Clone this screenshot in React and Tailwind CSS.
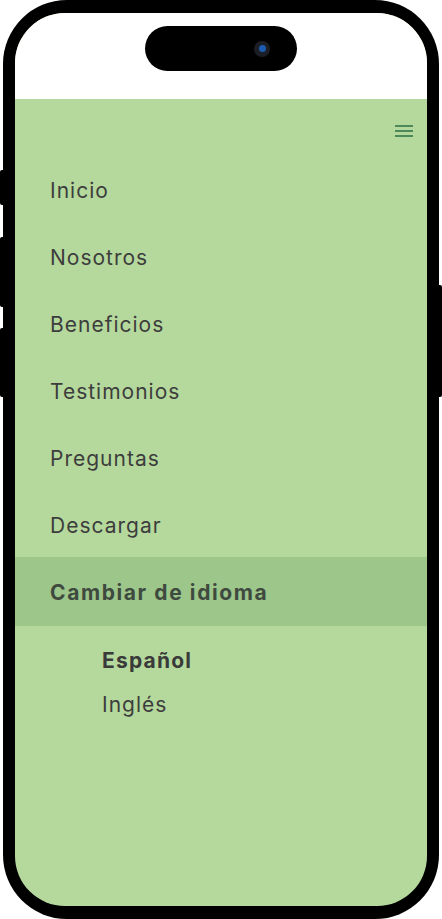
import React from 'react'

const items = ['Inicio', 'Nosotros', 'Beneficios', 'Testimonios', 'Preguntas', 'Descargar']

export default function App() {
  return (
    <div className="relative w-[442px] h-[919px] bg-white" style={{ fontFamily: 'Inter, "Noto Sans", sans-serif' }}>
      {/* botones laterales */}
      <div className="absolute left-0 top-[170px] w-[4px] h-[35px] bg-black rounded-l-[2px]" />
      <div className="absolute left-0 top-[237px] w-[4px] h-[70px] bg-black rounded-l-[2px]" />
      <div className="absolute left-0 top-[328px] w-[4px] h-[69px] bg-black rounded-l-[2px]" />
      <div className="absolute right-0 top-[285px] w-[4px] h-[112px] bg-black rounded-r-[2px]" />

      <div className="mx-[3px] h-full rounded-[64px] bg-black px-[12px] py-[13px]">
        <div className="h-full rounded-[50px] overflow-hidden bg-[#b5d99c] flex flex-col">
          {/* barra de estado */}
          <div className="h-[86px] bg-white flex justify-center pt-[13px]">
            <div className="w-[152px] h-[45px] rounded-full bg-black flex items-center justify-end pr-[27px]">
              <div className="w-[16px] h-[16px] rounded-full bg-[#1b1e24] flex items-center justify-center">
                <div className="w-[7px] h-[7px] rounded-full bg-[#1d5bb0]" />
              </div>
            </div>
          </div>

          {/* header */}
          <div className="h-[56px] flex justify-end pt-[26px] pr-[14px]">
            <div className="w-[18px] flex flex-col gap-[3px]">
              <span className="block h-[2px] bg-[#4e8a59]" />
              <span className="block h-[2px] bg-[#4e8a59]" />
              <span className="block h-[2px] bg-[#4e8a59]" />
            </div>
          </div>

          {/* menú */}
          <nav className="flex flex-col">
            {items.map((it) => (
              <a key={it} className="h-[67px] px-[35px] pt-[4px] flex items-center text-[21px] tracking-[1px] text-[#3d3d3d]">
                {it}
              </a>
            ))}
            <a className="h-[69px] px-[35px] pt-[2px] flex items-center bg-[#9dc68b] text-[21px] tracking-[1.6px] font-bold text-[#3f4a3f]">
              Cambiar de idioma
            </a>
            <div className="pt-[13px] flex flex-col">
              <a className="h-[44px] pl-[87px] flex items-center text-[21px] tracking-[1.2px] font-bold text-[#3a3a3a]">Español</a>
              <a className="h-[44px] pl-[87px] flex items-center text-[21px] tracking-[1px] text-[#3d3d3d]">Inglés</a>
            </div>
          </nav>
        </div>
      </div>
    </div>
  )
}
